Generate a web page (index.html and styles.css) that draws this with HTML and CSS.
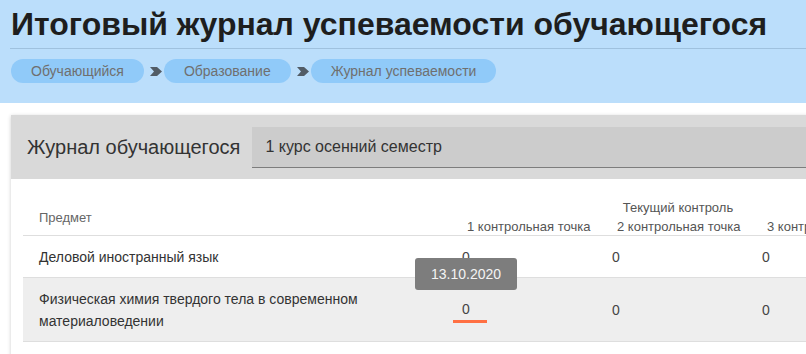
FILE: index.html
```html
<!DOCTYPE html>
<html lang="ru">
<head>
    <meta charset="UTF-8">
    <meta name="viewport" content="width=device-width, initial-scale=1.0">
    <title>Итоговый журнал успеваемости обучающегося</title>
    <link rel="stylesheet" href="styles.css">
</head>
<body>
    <div class="page-header">
        <h1>Итоговый журнал успеваемости обучающегося</h1>
        <div class="crumbs">
            <a class="crumb" href="#">Обучающийся</a>
            <span class="crumb-sep"><svg width="12" height="9" viewBox="0 0 12 9"><polygon points="0,0 7,0 12,4.5 7,9 0,9 4,4.5" fill="#525c66"/></svg></span>
            <a class="crumb" href="#">Образование</a>
            <span class="crumb-sep"><svg width="12" height="9" viewBox="0 0 12 9"><polygon points="0,0 7,0 12,4.5 7,9 0,9 4,4.5" fill="#525c66"/></svg></span>
            <a class="crumb" href="#">Журнал успеваемости</a>
        </div>
    </div>

    <div class="card">
        <div class="card-head">
            <span class="card-title">Журнал обучающегося</span>
            <div class="semester">1 курс осенний семестр</div>
        </div>
        <div class="card-body">
            <table class="journal">
                <thead>
                    <tr>
                        <th class="subj" rowspan="2">Предмет</th>
                        <th class="group" colspan="3">Текущий контроль</th>
                    </tr>
                    <tr class="sub">
                        <th>1 контрольная точка</th>
                        <th>2 контрольная точка</th>
                        <th>3 контрольная точка</th>
                    </tr>
                </thead>
                <tbody>
                    <tr>
                        <td class="subj">Деловой иностранный язык</td>
                        <td><span class="mark">0</span></td>
                        <td><span class="mark">0</span></td>
                        <td><span class="mark">0</span></td>
                    </tr>
                    <tr class="active">
                        <td class="subj">Физическая химия твердого тела в современном материаловедении</td>
                        <td><span class="mark focused">0<span class="tip">13.10.2020</span></span></td>
                        <td><span class="mark">0</span></td>
                        <td><span class="mark">0</span></td>
                    </tr>
                </tbody>
            </table>
        </div>
    </div>
</body>
</html>
```

FILE: styles.css
```css
body {
    margin: 0;
    overflow: hidden;
    font-family: "Liberation Sans", Arial, sans-serif;
    background-color: white;
    color: #333;
}
.page-header {
    background-color: #bbdefb;
    padding: 4px 0 20px 10px;
}
.page-header h1 {
    margin: 0;
    padding-left: 1px;
    font-size: 32px;
    line-height: 40px;
    font-weight: bold;
    color: #1e1e1e;
    white-space: nowrap;
}
.crumbs {
    display: flex;
    align-items: center;
    margin-top: 4px;
    padding-top: 10px;
    border-top: 1px solid #9fc1de;
}
.crumb {
    display: block;
    padding: 0 20px;
    height: 24px;
    line-height: 24px;
    font-size: 14px;
    color: #6f6f6f;
    text-decoration: none;
    background-color: #90caf9;
    border-radius: 12px;
}
.crumbs .crumb:first-child {
    margin-left: 1px;
}
.crumb-sep {
    display: flex;
    margin: 0 2px 0 6px;
}
.card {
    width: 1100px;
    margin: 12px 0 0 11px;
    background-color: white;
    box-shadow: 0 1px 4px rgba(0, 0, 0, 0.2);
}
.card-head {
    display: flex;
    align-items: center;
    gap: 12px;
    height: 64px;
    padding-left: 16px;
    background-color: #d9d9d9;
}
.card-title {
    font-size: 20px;
    color: #333;
    white-space: nowrap;
}
.semester {
    flex: 1;
    height: 40px;
    line-height: 40px;
    padding-left: 13px;
    font-size: 16px;
    color: #333;
    background-color: #cccccc;
    border-bottom: 1px solid #7d7d7d;
}
.card-body {
    padding: 21px 0 20px 12px;
}
.journal {
    border-collapse: collapse;
    table-layout: fixed;
    width: 880px;
}
.journal th {
    font-size: 13px;
    font-weight: normal;
    line-height: 16px;
    color: #666;
    padding: 0;
    text-align: left;
    white-space: nowrap;
}
.journal th.subj {
    width: 414px;
    padding-left: 16px;
    vertical-align: middle;
    border-bottom: 1px solid #dedede;
}
.journal th.group {
    text-align: center;
    padding-bottom: 3px;
    color: #555;
}
.journal tr.sub th {
    width: 136px;
    padding-left: 14px;
    color: #555;
    border-bottom: 1px solid #dedede;
}
.journal td {
    font-size: 14px;
    line-height: 22px;
    padding: 10px 0 9px;
    vertical-align: middle;
    border-bottom: 1px solid #dedede;
}
.journal td.subj {
    padding-left: 16px;
    padding-right: 80px;
}
.journal tr.active td {
    background-color: #eeeeee;
}
.mark {
    position: relative;
    display: inline-block;
    width: 34px;
    padding-left: 9px;
    box-sizing: border-box;
    color: #444;
}
.mark.focused {
    border-bottom: 3px solid #ff7043;
}
.tip {
    position: absolute;
    left: -38px;
    bottom: 30px;
    width: 102px;
    height: 32px;
    line-height: 32px;
    text-align: center;
    font-size: 14px;
    color: #f4f4f4;
    background-color: #7d7d7d;
    border-radius: 3px;
}
```
